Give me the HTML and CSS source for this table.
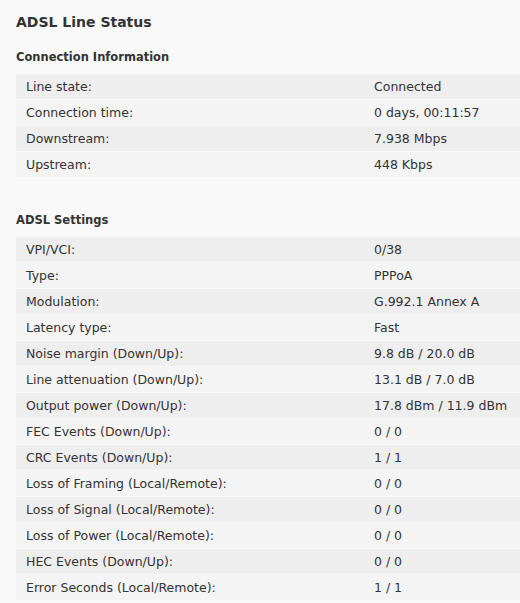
FILE: index.html
```html
<!DOCTYPE html>
<html>
<head>
    <meta charset="UTF-8">
    <title>ADSL Line Status</title>
    <link rel="stylesheet" href="styles.css">
</head>
<body>
    <h1 class="page-title">ADSL Line Status</h1>

    <div class="section">
        <h3 class="section-title">Connection Information</h3>
        <table class="status-table">
            <tr><td class="label">Line state:</td><td>Connected</td></tr>
            <tr><td class="label">Connection time:</td><td>0 days, 00:11:57</td></tr>
            <tr><td class="label">Downstream:</td><td>7.938 Mbps</td></tr>
            <tr><td class="label">Upstream:</td><td>448 Kbps</td></tr>
        </table>
    </div>

    <div class="section">
        <h3 class="section-title">ADSL Settings</h3>
        <table class="status-table">
            <tr><td class="label">VPI/VCI:</td><td>0/38</td></tr>
            <tr><td class="label">Type:</td><td>PPPoA</td></tr>
            <tr><td class="label">Modulation:</td><td>G.992.1 Annex A</td></tr>
            <tr><td class="label">Latency type:</td><td>Fast</td></tr>
            <tr><td class="label">Noise margin (Down/Up):</td><td>9.8 dB / 20.0 dB</td></tr>
            <tr><td class="label">Line attenuation (Down/Up):</td><td>13.1 dB / 7.0 dB</td></tr>
            <tr><td class="label">Output power (Down/Up):</td><td>17.8 dBm / 11.9 dBm</td></tr>
            <tr><td class="label">FEC Events (Down/Up):</td><td>0 / 0</td></tr>
            <tr><td class="label">CRC Events (Down/Up):</td><td>1 / 1</td></tr>
            <tr><td class="label">Loss of Framing (Local/Remote):</td><td>0 / 0</td></tr>
            <tr><td class="label">Loss of Signal (Local/Remote):</td><td>0 / 0</td></tr>
            <tr><td class="label">Loss of Power (Local/Remote):</td><td>0 / 0</td></tr>
            <tr><td class="label">HEC Events (Down/Up):</td><td>0 / 0</td></tr>
            <tr><td class="label">Error Seconds (Local/Remote):</td><td>1 / 1</td></tr>
        </table>
    </div>
</body>
</html>
```

FILE: styles.css
```css
body {
    font-family: 'DejaVu Sans', Verdana, sans-serif;
    font-size: 12.5px;
    margin: 0;
    padding: 0 0 0 16px;
    background: #f9f9f9;
    color: #333;
}
.page-title {
    font-size: 14px;
    font-weight: bold;
    margin: 0;
    padding-top: 13px;
    line-height: 18px;
}
.section {
    padding-bottom: 16px;
}
.section-title {
    font-size: 11.5px;
    font-weight: bold;
    margin: 17px 0 8px;
    line-height: 18px;
}
.status-table {
    width: 100%;
    border-collapse: collapse;
    table-layout: fixed;
}
.status-table td {
    height: 25px;
    padding: 0 0 0 10px;
    border-bottom: 1px solid #fafafa;
    vertical-align: middle;
    white-space: nowrap;
}
.status-table .label {
    width: 338px;
}
.status-table tr:nth-child(odd) td {
    background: #eeeeee;
}
.status-table tr:nth-child(even) td {
    background: #f4f4f4;
}
```
